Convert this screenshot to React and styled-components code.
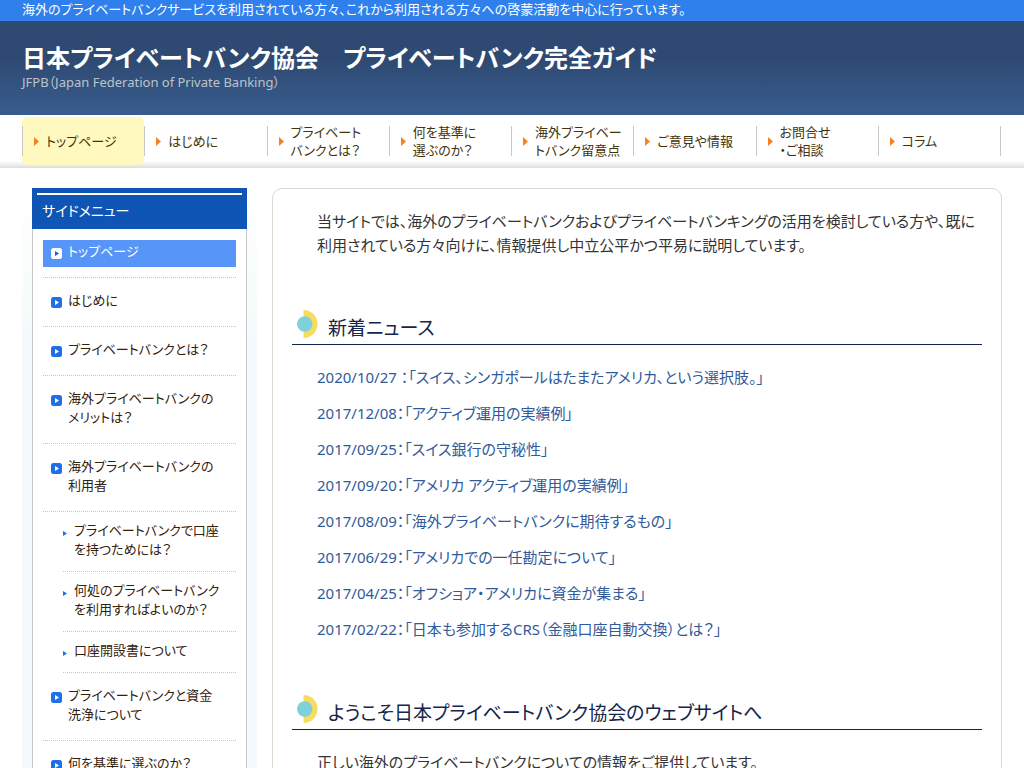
import React from "react";
import styled, { createGlobalStyle } from "styled-components";

const GlobalStyle = createGlobalStyle`
  * { box-sizing: border-box; }
  body {
    margin: 0;
    background: #fff;
    color: #333;
    font-family: "Noto Sans", "Noto Sans CJK JP", sans-serif;
    font-size: 15px;
    line-height: 24px;
    font-feature-settings: "palt";
  }
  h1, h2, p, ul { margin: 0; padding: 0; }
  ul { list-style: none; }
  a { text-decoration: none; }
`;

const TopBar = styled.p`
  padding: 0 22px;
  height: 21px;
  line-height: 19px;
  font-size: 13px;
  color: #fff;
  background: #2f80ed;
  white-space: nowrap;
`;

const Header = styled.header`
  height: 94px;
  padding: 21px 22px 0;
  background: linear-gradient(#2e4a72 0%, #2e4a72 40%, #385c8e 100%);
`;

const SiteTitle = styled.h1`
  font-size: 24px;
  line-height: 32px;
  font-weight: 700;
  a { color: #fff; }
`;

const Tagline = styled.p`
  font-size: 13px;
  line-height: 16px;
  color: #bdc3cb;
`;

const NavBar = styled.nav`
  padding: 2px 22px 0;
  height: 53px;
  background: linear-gradient(#fff 0, #fff 46px, #dedede 53px);
`;

const NavList = styled.ul`
  display: grid;
  grid-template-columns: repeat(8, 1fr);
  height: 48px;
  padding-right: 2px;
  background: linear-gradient(#c8c8c8, #c8c8c8) right 1px center / 1px 30px no-repeat;
`;

const NavLink = styled.a`
  display: flex;
  align-items: center;
  gap: 7px;
  height: 48px;
  padding-left: 12px;
  border-radius: 5px;
  font-size: 13px;
  line-height: 18px;
  color: #43330b;
  white-space: pre;
  background: linear-gradient(#c8c8c8, #c8c8c8) left center / 1px 30px no-repeat
    ${(p) => (p.$active ? "#fff9c0" : "transparent")};
`;

const Columns = styled.div`
  display: flex;
  gap: 15px;
  padding: 20px 22px 0;
`;

const Sidebar = styled.aside`
  flex: 0 0 235px;
  padding: 0 10px;
  background: linear-gradient(#fff 0, #f4fafb 150px);
`;

const SideTitle = styled.h2`
  height: 41px;
  padding: 5px;
  font-size: 14px;
  line-height: 32px;
  font-weight: 400;
  color: #fff;
  background: #0f55b6;
  span {
    display: block;
    padding-left: 5px;
    border-top: 2px solid #fff;
  }
`;

const SideList = styled.ul`
  padding: 0 10px;
  border: solid #c8c8c8;
  border-width: 0 1px;
  background: #fff;
  font-size: 13px;
  line-height: 19px;
`;

const SideItem = styled.li`
  padding: 11px 0 10px;
  border-bottom: 1px dotted #c4c4c4;
`;

const SideLink = styled.a`
  display: flex;
  gap: 6px;
  padding: 2px 8px 6px;
  white-space: pre;
  color: ${(p) => (p.$active ? "#fff" : "#32200c")};
  background: ${(p) => (p.$active ? "#5796f8" : "transparent")};
  svg { flex: none; margin-top: 6px; }
`;

const SubItem = styled.li`
  margin-left: 20px;
  padding: 9px 0 12px;
  border-bottom: 1px dotted #c4c4c4;
`;

const SubLink = styled.a`
  display: flex;
  gap: 7px;
  white-space: pre;
  color: #32200c;
  svg { flex: none; margin-top: 10px; }
`;

const Main = styled.main`
  flex: 1;
  min-width: 0;
  padding: 0 19px 20px;
  border: 1px solid #dadad0;
  border-radius: 10px;
`;

const Copy = styled.p`
  padding: 20px 0 6px 25px;
`;

const SectionTitle = styled.h2`
  display: flex;
  gap: 10px;
  height: 36px;
  margin-top: 46px;
  padding-left: 5px;
  border-bottom: 1px solid #15264a;
  font-size: 19px;
  line-height: 38px;
  font-weight: 400;
  color: #15264a;
  svg { flex: none; margin-top: 1px; }
`;

const News = styled.ul`
  padding: 14px 25px 1px;
`;

const NewsItem = styled.li`
  line-height: 36px;
  a { color: #305a9a; }
`;

const Arrow = () => (
  <svg width="5" height="9" viewBox="0 0 5 9"><path d="M0 0L5 4.5L0 9Z" fill="#f58220" /></svg>
);

const Bullet = ({ active }) => (
  <svg width="11" height="11" viewBox="0 0 11 11">
    <rect width="11" height="11" rx="2.5" fill={active ? "#fff" : "#1d70e6"} />
    <path d="M4 3L8 5.5L4 8Z" fill={active ? "#1d60c8" : "#fff"} />
  </svg>
);

const SubBullet = () => (
  <svg width="4" height="5" viewBox="0 0 4 5"><path d="M0 0L4 2.5L0 5Z" fill="#1d70e6" /></svg>
);

const Emblem = () => (
  <svg width="21" height="28" viewBox="0 0 21 28">
    <path d="M6.5 0A14 14 0 0 1 6.5 28Z" fill="#f6dc60" />
    <circle cx="7.7" cy="14" r="7.7" fill="#7fd1d9" />
  </svg>
);

const navItems = [
  "トップページ",
  "はじめに",
  "プライベート\nバンクとは？",
  "何を基準に\n選ぶのか？",
  "海外プライベー\nトバンク留意点",
  "ご意見や情報",
  "お問合せ\n・ご相談",
  "コラム",
];

const sideItems = [
  { text: "トップページ", active: true },
  { text: "はじめに" },
  { text: "プライベートバンクとは？" },
  { text: "海外プライベートバンクの\nメリットは？" },
  { text: "海外プライベートバンクの\n利用者" },
  { text: "プライベートバンクで口座\nを持つためには？", sub: true },
  { text: "何処のプライベートバンク\nを利用すればよいのか？", sub: true },
  { text: "口座開設書について", sub: true },
  { text: "プライベートバンクと資金\n洗浄について" },
  { text: "何を基準に選ぶのか？" },
];

const news = [
  "2020/10/27 ：「スイス、シンガポールはたまたアメリカ、という選択肢。」",
  "2017/12/08：「アクティブ運用の実績例」",
  "2017/09/25：「スイス銀行の守秘性」",
  "2017/09/20：「アメリカ アクティブ運用の実績例」",
  "2017/08/09：「海外プライベートバンクに期待するもの」",
  "2017/06/29：「アメリカでの一任勘定について」",
  "2017/04/25：「オフショア・アメリカに資金が集まる」",
  "2017/02/22：「日本も参加するCRS（金融口座自動交換）とは？」",
];

export default function App() {
  return (
    <>
      <GlobalStyle />
      <TopBar>海外のプライベートバンクサービスを利用されている方々、これから利用される方々への啓蒙活動を中心に行っています。</TopBar>
      <Header>
        <SiteTitle><a href="#top">日本プライベートバンク協会　プライベートバンク完全ガイド</a></SiteTitle>
        <Tagline>JFPB（Japan Federation of Private Banking）</Tagline>
      </Header>
      <NavBar>
        <NavList>
          {navItems.map((text, i) => (
            <li key={text}>
              <NavLink href="#nav" $active={i === 0}><Arrow />{text}</NavLink>
            </li>
          ))}
        </NavList>
      </NavBar>
      <Columns>
        <Sidebar>
          <SideTitle><span>サイドメニュー</span></SideTitle>
          <SideList>
            {sideItems.map(({ text, active, sub }) =>
              sub ? (
                <SubItem key={text}><SubLink href="#side"><SubBullet />{text}</SubLink></SubItem>
              ) : (
                <SideItem key={text}>
                  <SideLink href="#side" $active={active}><Bullet active={active} />{text}</SideLink>
                </SideItem>
              )
            )}
          </SideList>
        </Sidebar>
        <Main>
          <Copy>
            当サイトでは、海外のプライベートバンクおよびプライベートバンキングの活用を検討している方や、既に利用されている方々向けに、情報提供し中立公平かつ平易に説明しています。
          </Copy>
          <SectionTitle><Emblem />新着ニュース</SectionTitle>
          <News>
            {news.map((text) => (
              <NewsItem key={text}><a href="#news">{text}</a></NewsItem>
            ))}
          </News>
          <SectionTitle><Emblem />ようこそ日本プライベートバンク協会のウェブサイトへ</SectionTitle>
          <Copy>正しい海外のプライベートバンクについての情報をご提供しています。</Copy>
        </Main>
      </Columns>
    </>
  );
}
